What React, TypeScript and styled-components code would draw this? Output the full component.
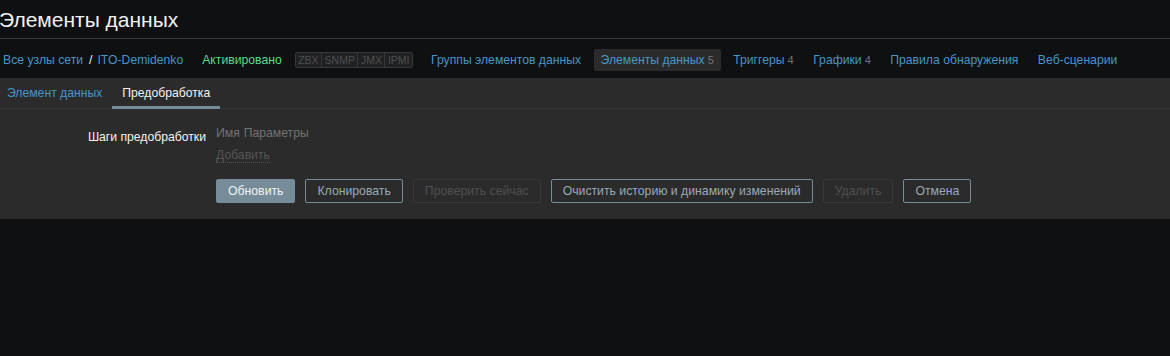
import React from "react";
import styled, { createGlobalStyle } from "styled-components";

const GlobalStyle = createGlobalStyle`
  html, body {
    margin: 0;
    padding: 0;
    background: #0e1012;
  }
  body {
    font-family: Arial, "Liberation Sans", sans-serif;
    font-size: 12.2px;
    color: #f2f2f2;
  }
`

const navItems = [
  { name: 'Группы элементов данных' },
  { name: 'Элементы данных', count: 5, selected: true },
  { name: 'Триггеры', count: 4 },
  { name: 'Графики', count: 4 },
  { name: 'Правила обнаружения' },
  { name: 'Веб-сценарии' },
]

const buttons: { label: string, kind: 'main' | 'alt' | 'off' }[] = [
  { label: 'Обновить', kind: 'main' },
  { label: 'Клонировать', kind: 'alt' },
  { label: 'Проверить сейчас', kind: 'off' },
  { label: 'Очистить историю и динамику изменений', kind: 'alt' },
  { label: 'Удалить', kind: 'off' },
  { label: 'Отмена', kind: 'alt' },
]

export default function App() {
  return (
    <Page>
      <GlobalStyle />
      <Header>
        <Title>Элементы данных</Title>
      </Header>
      <Nav>
        <Breadcrumbs>
          <Link>Все узлы сети</Link>
          <Slash>/</Slash>
          <Link>ITO-Demidenko</Link>
        </Breadcrumbs>
        <Status>Активировано</Status>
        <Availability>
          <span>ZBX</span>
          <span>SNMP</span>
          <span>JMX</span>
          <span>IPMI</span>
        </Availability>
        <NavList>
          {navItems.map(item => (
            <NavItem key={item.name} selected={item.selected}>
              <Link>{item.name}</Link>
              {item.count !== undefined && <Count>{item.count}</Count>}
            </NavItem>
          ))}
        </NavList>
      </Nav>
      <Panel>
        <Tabs>
          <Tab>Элемент данных</Tab>
          <Tab active>Предобработка</Tab>
        </Tabs>
        <Form>
          <Label>Шаги предобработки</Label>
          <Field>
            <StepsHead>
              <span>Имя</span>
              <span>Параметры</span>
            </StepsHead>
            <AddLink>Добавить</AddLink>
          </Field>
          <div />
          <Buttons>
            {buttons.map(b => (
              <Btn key={b.label} kind={b.kind}>{b.label}</Btn>
            ))}
          </Buttons>
        </Form>
      </Panel>
    </Page>
  )
}

const Page = styled.div`
  min-height: 356px;
  background: #0e1012;
`

const Header = styled.div`
  height: 38px;
  border-bottom: 1px solid #383838;
  display: flex;
  align-items: center;
`

const Title = styled.h1`
  margin: 1px 0 0 -1px;
  font-size: 21px;
  font-weight: normal;
  line-height: 24px;
  color: #f2f2f2;
`

const Nav = styled.div`
  height: 39px;
  padding-top: 3px;
  box-sizing: border-box;
  display: flex;
  align-items: center;
`

const Breadcrumbs = styled.div`
  display: flex;
  align-items: center;
  margin-left: 3px;
`

const Link = styled.span`
  color: #4796c4;
`

const Slash = styled.span`
  color: #f2f2f2;
  margin: 0 5px 0 6px;
`

const Status = styled.span`
  color: #59db8f;
  margin-left: 19px;
`

const Availability = styled.div`
  display: flex;
  margin-left: 13px;
  height: 16px;
  border: 1px solid #383838;
  border-radius: 2px;
  background: #1f2123;
  box-sizing: border-box;

  span {
    padding: 0 2.5px;
    font-size: 10.5px;
    line-height: 14px;
    color: #4f4f4f;
    border-left: 1px solid #383838;
  }
  span:first-child {
    border-left: none;
  }
`

const NavList = styled.div`
  display: flex;
  align-items: center;
  gap: 5.5px;
  margin-left: 11px;
`

const NavItem = styled.div<{ selected?: boolean }>`
  display: flex;
  align-items: center;
  gap: 3px;
  height: 22px;
  padding: 0 7px;
  border-radius: 2px;
  background: ${p => (p.selected ? '#2b2b2b' : 'transparent')};
`

const Count = styled.span`
  color: #737373;
  font-size: 11px;
`

const Panel = styled.div`
  background: #2b2b2b;
`

const Tabs = styled.div`
  display: flex;
  height: 31px;
  box-sizing: border-box;
  border-bottom: 1px solid #383838;
  margin-left: -3px;
`

const Tab = styled.div<{ active?: boolean }>`
  display: flex;
  align-items: center;
  padding: 2px 10px 0;
  color: ${p => (p.active ? '#f2f2f2' : '#4796c4')};
  border-bottom: 3px solid ${p => (p.active ? '#768d99' : 'transparent')};
  box-sizing: border-box;
  height: 31px;
`

const Form = styled.div`
  display: grid;
  grid-template-columns: 206px 1fr;
  column-gap: 10px;
  row-gap: 16px;
  padding: 17px 0 16px;
`

const Label = styled.div`
  text-align: right;
  color: #f2f2f2;
  padding-top: 4px;
  line-height: 14px;
`

const Field = styled.div`
  display: flex;
  flex-direction: column;
  align-items: flex-start;
  gap: 8px;
`

const StepsHead = styled.div`
  display: flex;
  gap: 4px;
  color: #737373;
  line-height: 14px;
`

const AddLink = styled.span`
  color: #555555;
  line-height: 14px;
  border-bottom: 1px dotted #555555;
`

const Buttons = styled.div`
  display: flex;
  gap: 10px;
`

const Btn = styled.button<{ kind: 'main' | 'alt' | 'off' }>`
  height: 24px;
  padding: 0 11px;
  font-family: Arial, "Liberation Sans", sans-serif;
  font-size: 12.25px;
  border-radius: 2px;
  border: 1px solid ${p => (p.kind === 'off' ? '#383838' : '#768d99')};
  background: ${p => (p.kind === 'main' ? '#768d99' : '#2b2b2b')};
  color: ${p => (p.kind === 'main' ? '#f2f2f2' : p.kind === 'alt' ? '#9aa9b2' : '#4f4f4f')};
`
